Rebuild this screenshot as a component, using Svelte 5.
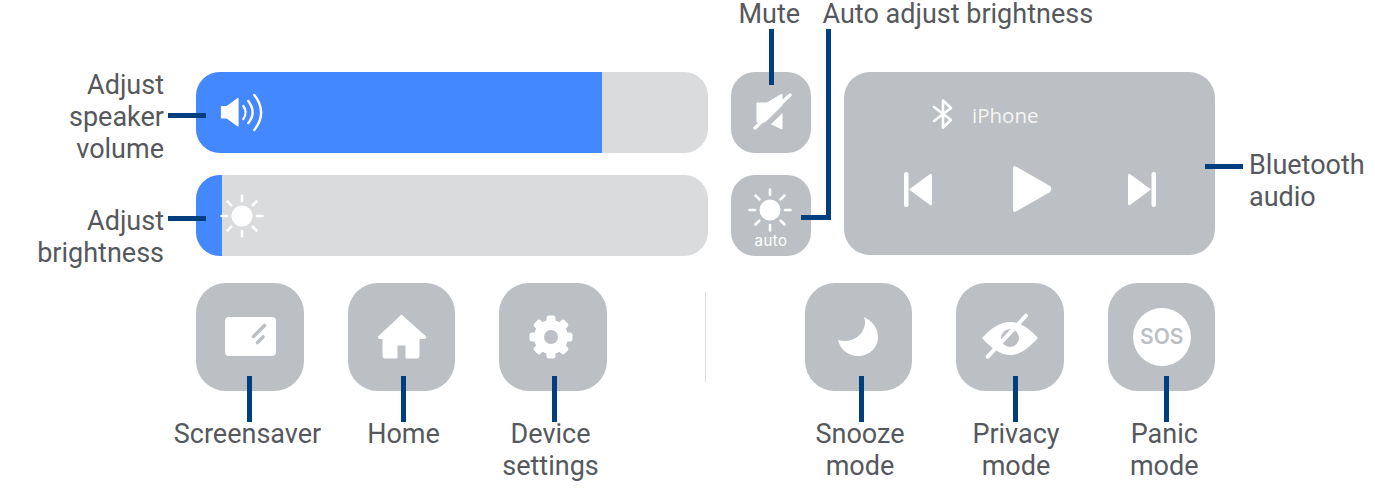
<script>
  const rays = [0, 45, 90, 135, 180, 225, 270, 315];
  const leftTiles = [
    { id: 'screen', label: ['Screensaver'], line: 51, dx: -2.25 },
    { id: 'home', label: ['Home'], line: 53, dx: 2.25 },
    { id: 'gear', label: ['Device', 'settings'], line: 52.5, dx: -2.25 }
  ];
  const rightTiles = [
    { id: 'moon', label: ['Snooze', 'mode'], line: 54.5, dx: 1.75 },
    { id: 'eye', label: ['Privacy', 'mode'], line: 56.5, dx: 6.25 },
    { id: 'sos', label: ['Panic', 'mode'], line: 56.5, dx: 3 }
  ];
  const teeth = [0, 45, 90, 135, 180, 225, 270, 315];
</script>

{#snippet sun(cx, cy, r, r1, r2, w)}
  <circle {cx} {cy} {r} fill="#fff" />
  {#each rays as a}
    <line x1={cx} y1={cy - r1} x2={cx} y2={cy - r2} stroke="#fff" stroke-width={w} stroke-linecap="round" transform="rotate({a} {cx} {cy})" />
  {/each}
{/snippet}

{#snippet tile(t)}
  <div class="cell">
    <div class="tile">
      {#if t.id === 'screen'}
        <svg width="107" height="108" viewBox="0 0 107 108">
          <rect x="29" y="34" width="51" height="39" rx="4" fill="#fff" />
          <line x1="57.5" y1="53.5" x2="68.5" y2="42.5" stroke="#bcbfc3" stroke-width="3.6" stroke-linecap="round" />
          <line x1="61.5" y1="59.5" x2="67" y2="54" stroke="#bcbfc3" stroke-width="3.6" stroke-linecap="round" />
        </svg>
      {:else if t.id === 'home'}
        <svg width="107" height="108" viewBox="0 0 107 108">
          <path d="M30.5 53.5 L53.5 32 L77.5 53.5 Q78.5 55.5 76 55.5 L71 55.5 L71 73.5 Q71 75 69 75 L58 75 L58 62 L49 62 L49 75 L37 75 Q35 75 35 73.5 L35 55.5 L31.5 55.5 Q29.5 55.5 30.5 53.5 Z" fill="#fff" stroke="#fff" stroke-linejoin="round" />
        </svg>
      {:else if t.id === 'gear'}
        <svg width="107" height="108" viewBox="0 0 107 108">
          <circle cx="52" cy="54" r="12" fill="none" stroke="#fff" stroke-width="10" />
          {#each teeth as a}
            <rect x="47.5" y="32.5" width="9" height="9" rx="2.5" fill="#fff" transform="rotate({a} 52 54)" />
          {/each}
        </svg>
      {:else if t.id === 'moon'}
        <svg width="107" height="108" viewBox="0 0 107 108">
          <path d="M59 34 C68 38 73 46 73 54 C73 65 64 73 53 73 C43 73 35 66 33 57 C44 60 52 56 57 49 C60 44 61 39 59 34 Z" fill="#fff" />
        </svg>
      {:else if t.id === 'eye'}
        <svg width="107" height="108" viewBox="0 0 107 108">
          <path d="M26 55 C36 44 45 39 54 39 C63 39 72 44 82 55 C72 66 63 72 54 72 C45 72 36 66 26 55 Z" fill="#fff" />
          <circle cx="54" cy="55" r="9" fill="#bcbfc3" />
          <line x1="31.7" y1="73.7" x2="70" y2="32.7" stroke="#fff" stroke-width="4" stroke-linecap="round" />
        </svg>
      {:else}
        <div class="sos">SOS</div>
      {/if}
      <span class="lead lead-v tile-lead" style="left:{t.line}px"></span>
    </div>
    <div class="label tile-label" style="transform:translateX({t.dx}px)">
      {#each t.label as l}<div>{l}</div>{/each}
    </div>
  </div>
{/snippet}

<div class="stage">
  <div class="top">
    <div class="bars">
      <div class="bar">
        <div class="fill volume"></div>
        <svg class="bar-icon" width="80" height="81" viewBox="0 0 80 81">
          <path d="M25.5 34.5 H31 L42 26.5 V54 L31 46 H25.5 Z" fill="#fff" stroke="#fff" stroke-width="1.2" stroke-linejoin="round" />
          <path d="M47.3 34 Q52 40.5 47.3 47" fill="none" stroke="#fff" stroke-width="2.2" stroke-linecap="round" />
          <path d="M52.3 29 Q61 40.5 52.3 51" fill="none" stroke="#fff" stroke-width="2.4" stroke-linecap="round" />
          <path d="M58.3 23 Q72 40.5 58.3 58" fill="none" stroke="#fff" stroke-width="2.4" stroke-linecap="round" />
        </svg>
        <span class="lead lead-h lead-bar"></span>
        <div class="label side">
          <div>Adjust</div><div>speaker</div><div>volume</div>
        </div>
      </div>
      <div class="bar">
        <div class="fill bright"></div>
        <svg class="bar-icon" width="80" height="81" viewBox="0 0 80 81">
          {@render sun(46, 41, 10.5, 15, 20.5, 2.6)}
        </svg>
        <span class="lead lead-h lead-bar"></span>
        <div class="label side side2">
          <div>Adjust</div><div>brightness</div>
        </div>
      </div>
    </div>

    <div class="minis">
      <div class="mini">
        <svg width="80" height="81" viewBox="0 0 80 81">
          <path d="M26 31 H36 L51 22 V57 L36 50 H26 Z" fill="#fff" stroke="#fff" stroke-width="1" stroke-linejoin="round" />
          <line x1="22" y1="66" x2="62" y2="27" stroke="#bcbfc3" stroke-width="5.5" />
          <line x1="24" y1="56" x2="59" y2="23" stroke="#fff" stroke-width="3.4" stroke-linecap="round" />
        </svg>
        <span class="lead lead-v lead-mute"></span>
        <div class="label above mute-label">Mute</div>
      </div>
      <div class="mini">
        <svg width="80" height="81" viewBox="0 0 80 81">
          {@render sun(39, 35, 10.5, 15, 20.5, 2.6)}
        </svg>
        <div class="auto">auto</div>
        <span class="lead lead-h lead-auto-h"></span>
        <span class="lead lead-v lead-auto-v"></span>
        <div class="label above auto-label">Auto adjust brightness</div>
      </div>
    </div>

    <div class="audio">
      <div class="device">
        <svg width="24" height="32" viewBox="0 0 24 32">
          <path d="M3 9 L20 22 L12 29.5 V2.5 L20 10 L3 23" fill="none" stroke="#fff" stroke-width="2.6" stroke-linejoin="round" stroke-linecap="round" />
        </svg>
        <span class="name">iPhone</span>
      </div>
      <div class="controls">
        <svg width="30" height="37" viewBox="0 0 30 37">
          <rect x="1" y="1" width="4.5" height="35" rx="2" fill="#fff" />
          <path d="M6 18.5 L27 3 Q29 2 29 4.5 V32.5 Q29 35 27 34 Z" fill="#fff" />
        </svg>
        <svg class="play" width="40" height="48" viewBox="0 0 40 48">
          <path d="M1 3.5 Q1 0 4 1.5 L38 21 Q40.5 24 38 27 L4 46.5 Q1 48 1 44.5 Z" fill="#fff" />
        </svg>
        <svg width="30" height="37" viewBox="0 0 30 37">
          <rect x="24.5" y="1" width="4.5" height="35" rx="2" fill="#fff" />
          <path d="M24 18.5 L3 3 Q1 2 1 4.5 V32.5 Q1 35 3 34 Z" fill="#fff" />
        </svg>
      </div>
      <span class="lead lead-h lead-audio"></span>
      <div class="label audio-label"><div>Bluetooth</div><div>audio</div></div>
    </div>
  </div>

  <div class="bottom">
    <div class="group">
      {#each leftTiles as t}{@render tile(t)}{/each}
    </div>
    <div class="divider"></div>
    <div class="group">
      {#each rightTiles as t}{@render tile(t)}{/each}
    </div>
  </div>
</div>

<style>
  :global(body) {
    margin: 0;
    background: #fff;
  }
  .stage {
    width: 1375px;
    height: 496px;
    box-sizing: border-box;
    padding: 72px 0 0 196px;
    font-family: Roboto, "Liberation Sans", sans-serif;
    overflow: hidden;
  }
  .top {
    display: flex;
    align-items: flex-start;
  }
  .bars {
    width: 512px;
    display: flex;
    flex-direction: column;
    gap: 22px;
  }
  .bar {
    position: relative;
    height: 81px;
    border-radius: 24px;
    background: #d9dbdd;
  }
  .fill {
    position: absolute;
    inset: 0 auto 0 0;
    background: #4488ff;
    border-radius: 24px 0 0 24px;
  }
  .volume { width: 406px; }
  .bright { width: 26px; }
  .bar-icon {
    position: absolute;
    left: 0;
    top: 0;
  }
  .lead {
    position: absolute;
    background: #003f7f;
    display: block;
  }
  .lead-h { height: 5px; }
  .lead-v { width: 5px; }
  .lead-bar {
    left: -28px;
    top: 41px;
    width: 38px;
  }
  .label {
    font-size: 27px;
    line-height: 32px;
    color: #55585d;
    white-space: nowrap;
  }
  .side {
    position: absolute;
    right: calc(100% + 32px);
    top: -3px;
    text-align: right;
  }
  .side2 { top: 30px; }
  .minis {
    margin-left: 23px;
    display: flex;
    flex-direction: column;
    gap: 22px;
  }
  .mini {
    position: relative;
    width: 80px;
    height: 81px;
    border-radius: 24px;
    background: #bcbfc3;
  }
  .mini svg {
    display: block;
  }
  .auto {
    position: absolute;
    left: 0;
    right: 0;
    top: 57px;
    text-align: center;
    color: #fff;
    font-family: Inter, sans-serif;
    font-size: 15px;
    letter-spacing: 0.5px;
    line-height: 18px;
  }
  .lead-mute {
    left: 38px;
    top: -43px;
    height: 56px;
  }
  .above {
    position: absolute;
    line-height: 28px;
    bottom: calc(100% + 44px);
  }
  .mute-label { left: 7.5px; }
  .auto-label {
    left: 91.5px;
    bottom: calc(100% + 147px);
  }
  .lead-auto-h {
    left: 70px;
    top: 40px;
    width: 30px;
  }
  .lead-auto-v {
    left: 95px;
    top: -146px;
    height: 191px;
  }
  .audio {
    position: relative;
    margin-left: 33px;
    width: 371px;
    height: 183px;
    box-sizing: border-box;
    border-radius: 26px;
    background: #bcbfc3;
    padding-top: 26px;
  }
  .device {
    display: flex;
    align-items: center;
    margin-left: 87px;
    height: 32px;
  }
  .name {
    margin-left: 17px;
    margin-top: 2px;
    color: #fff;
    opacity: 0.85;
    font-family: "Open Sans", sans-serif;
    font-size: 20.5px;
    line-height: 32px;
  }
  .controls {
    display: flex;
    align-items: center;
    margin: 35px 0 0 59px;
    height: 48px;
  }
  .controls svg { display: block; }
  .play { margin: 0 75px 0 79px; }
  .lead-audio {
    left: 361px;
    top: 92px;
    width: 38px;
  }
  .audio-label {
    position: absolute;
    left: 405px;
    top: 77px;
  }
  .bottom {
    display: flex;
    align-items: flex-start;
    margin-top: 27px;
  }
  .group {
    display: flex;
    gap: 44px;
  }
  .divider {
    width: 1px;
    height: 90px;
    margin: 9px 98.5px 0 98.5px;
    background: #dcdedf;
  }
  .cell {
    width: 107.5px;
    display: flex;
    flex-direction: column;
    align-items: center;
  }
  .tile {
    position: relative;
    width: 107.5px;
    height: 108px;
    border-radius: 30px;
    background: #bcbfc3;
    flex: none;
    display: flex;
    align-items: center;
    justify-content: center;
  }
  .tile svg { display: block; }
  .tile-lead {
    top: 93px;
    height: 46px;
  }
  .tile-label {
    margin-top: 27px;
    text-align: center;
  }
  .sos {
    width: 58px;
    height: 58px;
    margin-top: -1px;
    margin-right: -1px;
    border-radius: 50%;
    background: #fff;
    color: #bcbfc3;
    display: flex;
    align-items: center;
    justify-content: center;
    font-family: Inter, sans-serif;
    font-weight: 600;
    font-size: 21px;
  }
</style>
